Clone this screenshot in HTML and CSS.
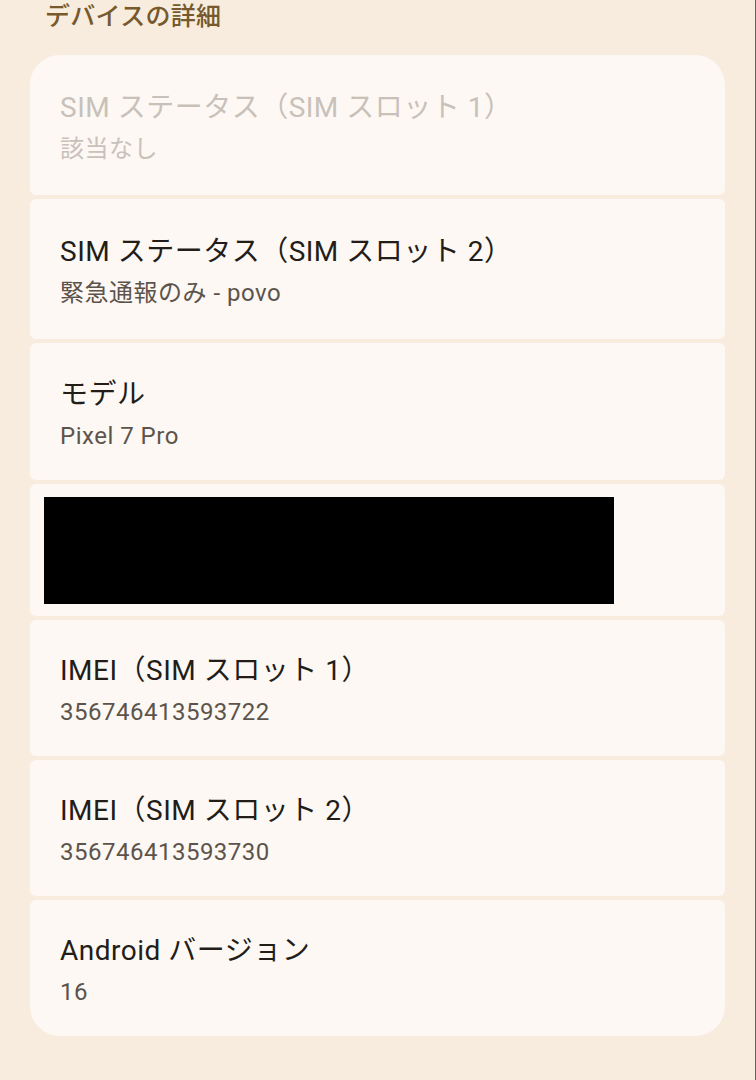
FILE: index.html
```html
<!DOCTYPE html>
<html lang="ja">
<head>
<meta charset="UTF-8">
<meta name="viewport" content="width=device-width, initial-scale=1.0">
<title>デバイスの詳細</title>
<link rel="stylesheet" href="styles.css">
</head>
<body>
<div class="screen">
<h2 class="section-title">デバイスの詳細</h2>
<div class="list">
<div class="item disabled">
<div class="item-title">SIM ステータス（SIM スロット 1）</div>
<div class="item-summary">該当なし</div>
</div>
<div class="item">
<div class="item-title">SIM ステータス（SIM スロット 2）</div>
<div class="item-summary">緊急通報のみ - povo</div>
</div>
<div class="item">
<div class="item-title">モデル</div>
<div class="item-summary">Pixel 7 Pro</div>
</div>
<div class="item redacted-item">
<div class="redacted"></div>
</div>
<div class="item">
<div class="item-title">IMEI（SIM スロット 1）</div>
<div class="item-summary">356746413593722</div>
</div>
<div class="item">
<div class="item-title">IMEI（SIM スロット 2）</div>
<div class="item-summary">356746413593730</div>
</div>
<div class="item">
<div class="item-title">Android バージョン</div>
<div class="item-summary">16</div>
</div>
</div>
</div>
</body>
</html>
```

FILE: styles.css
```css
body {
margin: 0;
background-color: #f8ecde;
font-family: Roboto, "Noto Sans CJK JP", sans-serif;
}
.screen {
width: 755px;
height: 1080px;
border-right: 1px solid #6a615a;
overflow: hidden;
}
.section-title {
margin: 0;
padding: 1px 0 0 45px;
height: 55px;
box-sizing: border-box;
font-size: 25px;
font-weight: 500;
line-height: 32px;
letter-spacing: 0.3px;
color: #76592c;
}
.list {
display: flex;
flex-direction: column;
gap: 4px;
margin: 0 30px;
}
.item {
background-color: #fdf8f3;
border-radius: 6px;
height: 136px;
padding: 6px 30px 0;
box-sizing: border-box;
display: flex;
flex-direction: column;
justify-content: center;
}
.item:first-child {
border-radius: 30px 30px 6px 6px;
height: 140px;
}
.item:nth-child(2) {
height: 140px;
}
.item:nth-child(3) {
height: 137px;
}
.item:last-child {
border-radius: 6px 6px 30px 30px;
}
.item-title {
font-size: 28px;
line-height: 42px;
letter-spacing: 0.5px;
color: #221d18;
}
.item-summary {
font-size: 24px;
line-height: 40px;
letter-spacing: 0.5px;
color: #5c544c;
}
.disabled .item-title,
.disabled .item-summary {
color: #c8c1ba;
}
.redacted-item {
height: 132px;
padding: 0 14px;
}
.redacted {
width: 570px;
height: 107px;
background-color: #000;
}
```
